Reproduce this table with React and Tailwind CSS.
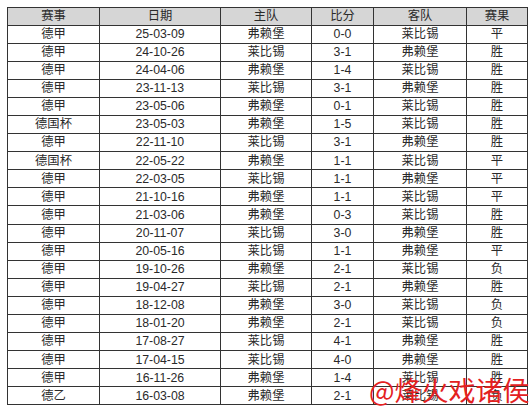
const rows = [
  ['德甲', '25-03-09', '弗赖堡', '0-0', '莱比锡', '平'],
  ['德甲', '24-10-26', '莱比锡', '3-1', '弗赖堡', '胜'],
  ['德甲', '24-04-06', '弗赖堡', '1-4', '莱比锡', '胜'],
  ['德甲', '23-11-13', '莱比锡', '3-1', '弗赖堡', '胜'],
  ['德甲', '23-05-06', '弗赖堡', '0-1', '莱比锡', '胜'],
  ['德国杯', '23-05-03', '弗赖堡', '1-5', '莱比锡', '胜'],
  ['德甲', '22-11-10', '莱比锡', '3-1', '弗赖堡', '胜'],
  ['德国杯', '22-05-22', '弗赖堡', '1-1', '莱比锡', '平'],
  ['德甲', '22-03-05', '莱比锡', '1-1', '弗赖堡', '平'],
  ['德甲', '21-10-16', '弗赖堡', '1-1', '莱比锡', '平'],
  ['德甲', '21-03-06', '弗赖堡', '0-3', '莱比锡', '胜'],
  ['德甲', '20-11-07', '莱比锡', '3-0', '弗赖堡', '胜'],
  ['德甲', '20-05-16', '莱比锡', '1-1', '弗赖堡', '平'],
  ['德甲', '19-10-26', '弗赖堡', '2-1', '莱比锡', '负'],
  ['德甲', '19-04-27', '莱比锡', '2-1', '弗赖堡', '胜'],
  ['德甲', '18-12-08', '弗赖堡', '3-0', '莱比锡', '负'],
  ['德甲', '18-01-20', '弗赖堡', '2-1', '莱比锡', '负'],
  ['德甲', '17-08-27', '莱比锡', '4-1', '弗赖堡', '胜'],
  ['德甲', '17-04-15', '莱比锡', '4-0', '弗赖堡', '胜'],
  ['德甲', '16-11-26', '弗赖堡', '1-4', '莱比锡', '胜'],
  ['德乙', '16-03-08', '弗赖堡', '2-1', '莱比锡', '负'],
];

const headers = ['赛事', '日期', '主队', '比分', '客队', '赛果'];

export default function App() {
  return (
    <div
      className="relative w-[530px] h-[418px] bg-white pl-[7px] pt-[7px]"
      style={{ fontFamily: '"Liberation Sans", "Noto Sans CJK SC", sans-serif' }}
    >
      <table className="table-fixed border-collapse w-[520px] text-[12.3px] text-[#2a2a2a] leading-none">
        <colgroup>
          <col className="w-[92px]" />
          <col className="w-[121px]" />
          <col className="w-[91px]" />
          <col className="w-[62px]" />
          <col className="w-[93px]" />
          <col className="w-[61px]" />
        </colgroup>
        <thead>
          <tr className="h-[17.5px] bg-[#d6d6d6]">
            {headers.map((h) => (
              <th key={h} className="border border-[#333] font-normal text-center p-0">
                {h}
              </th>
            ))}
          </tr>
        </thead>
        <tbody>
          {rows.map((r, i) => (
            <tr key={i} className="h-[18.1px]">
              {r.map((c, j) => (
                <td key={j} className="border border-[#333] text-center p-0">
                  {c}
                </td>
              ))}
            </tr>
          ))}
        </tbody>
      </table>

      {/* watermark */}
      <div
        className="absolute left-[369px] top-[376px] text-[27px] leading-none text-[#e3211f] font-normal whitespace-nowrap"
        style={{ fontFamily: '"Noto Sans CJK SC", sans-serif' }}
      >
        @烽火戏诸侯
      </div>
    </div>
  );
}
